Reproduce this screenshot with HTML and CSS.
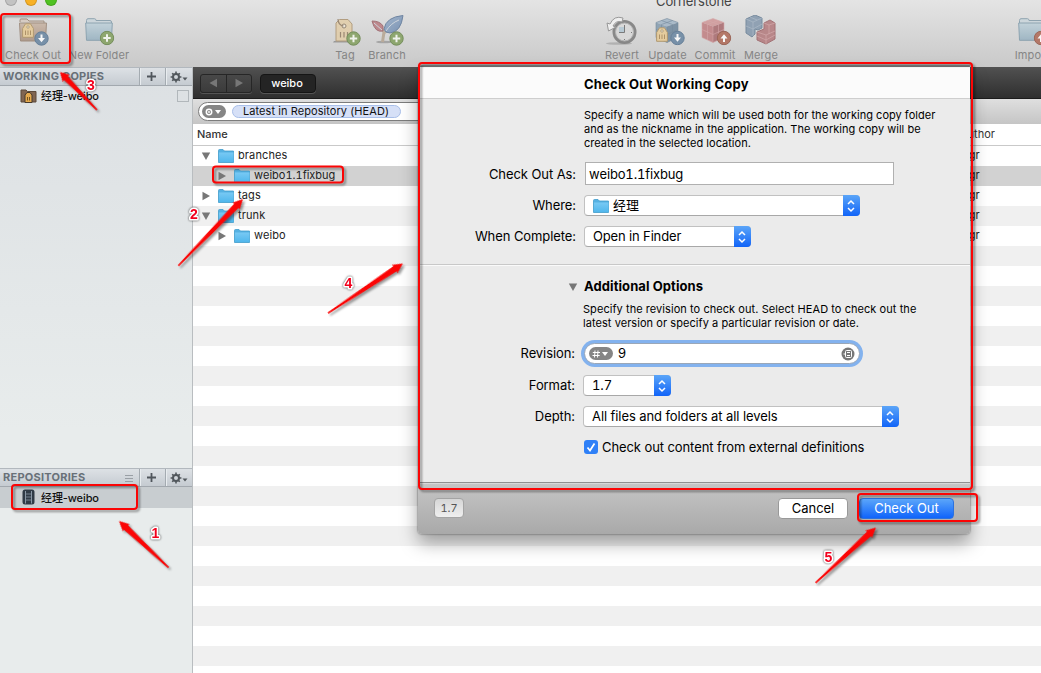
FILE: index.html
```html
<!DOCTYPE html>
<html lang="en">
<head>
<meta charset="utf-8">
<title>Cornerstone</title>
<link rel="stylesheet" href="styles.css">
</head>
<body>
<svg class="defs" width="0" height="0">
  <defs>
    <linearGradient id="gBlue" x2="0" y2="1"><stop stop-color="#78c9f4"/><stop offset="1" stop-color="#51b7ec"/></linearGradient>
    <linearGradient id="gPale" x2="0" y2="1"><stop stop-color="#bdd0da"/><stop offset="1" stop-color="#94b0c0"/></linearGradient>
    <linearGradient id="gBrown" x2="0" y2="1"><stop stop-color="#c8b3a2"/><stop offset="1" stop-color="#a78d7b"/></linearGradient>
    <linearGradient id="gLeaf" x2="1" y2="1"><stop stop-color="#98afca"/><stop offset="1" stop-color="#6482aa"/></linearGradient>
    <symbol id="folder" viewBox="0 0 16 14">
      <path d="M.5 1.5Q.5.5 1.500.5H5L6.500 2H15.500V13.500H.500z" fill="#55b1e2" stroke="#419dcc" stroke-width=".8"/>
      <path d="M1 3.500H15.500V13H1z" fill="url(#gBlue)"/>
    </symbol>
    <symbol id="bigfolder" viewBox="0 0 28 24">
      <path d="M1.500 5V2.500Q1.500.7 3 .7H9.500Q11 .7 11 2.500H25Q26.500 2.500 26.500 4V6" fill="#c9d5dc" stroke="#7f98a7"/>
      <path d="M.7 5H27.300L26.500 22.300H1.500z" fill="url(#gPale)" stroke="#7c98a8"/>
    </symbol>
    <symbol id="tag" viewBox="0 0 12 15">
      <path d="M.6 5.500 3.500.8H8.500L11.400 5.500V14.300H.6z" fill="#e8ca92" stroke="#a88c5c"/>
      <circle cx="6" cy="4" r="1.200" fill="#fff6dc" stroke="#8c7751" stroke-width=".7"/>
      <path d="M3.500 7.500V12M6 7.500V12M8.500 7.500V12" stroke="#a58350"/>
    </symbol>
    <symbol id="plus" viewBox="0 0 15 15">
      <circle cx="7.500" cy="7.500" r="6.700" fill="#7f9d59" stroke="#607e42"/>
      <path d="M7.500 3.800V11.200M3.800 7.500H11.200" stroke="#f7faf2" stroke-width="2"/>
    </symbol>
    <symbol id="down" viewBox="0 0 15 15">
      <circle cx="7.500" cy="7.500" r="6.700" fill="#64829f" stroke="#4f6d8b"/>
      <path d="M6.500 3.500H8.500V7H11L7.500 11.300 4 7H6.500z" fill="#fff"/>
    </symbol>
    <symbol id="up" viewBox="0 0 15 15">
      <circle cx="7.500" cy="7.500" r="6.700" fill="#ad6450" stroke="#8e4e3d"/>
      <path d="M6.500 11.500H8.500V8H11L7.500 3.700 4 8H6.500z" fill="#fff"/>
    </symbol>
    <symbol id="gear" viewBox="0 0 18 12">
      <circle cx="6" cy="6" r="3" fill="none" stroke="#51575c" stroke-width="2"/>
      <path d="M6 .6V3M6 9V11.400M.6 6H3M9 6H11.400M2.200 2.200 3.800 3.800M8.200 8.200 9.800 9.800M2.200 9.800 3.800 8.200M8.200 3.800 9.800 2.200" stroke="#51575c" stroke-width="1.600"/>
      <path d="M12.500 6.500H17.500L15 9.500z" fill="#51575c"/>
    </symbol>
    <symbol id="right" viewBox="0 0 10 10"><path d="M1.500 .8 9 5 1.500 9.200z" fill="#777"/></symbol>
    <symbol id="open" viewBox="0 0 10 10"><path d="M.8 1.500H9.200L5 9z" fill="#777"/></symbol>
    <symbol id="updown" viewBox="0 0 10 14"><path d="M2 5 5 2 8 5M2 9 5 12 8 9" fill="none" stroke="#fff" stroke-width="1.500"/></symbol>
    <symbol id="cube" viewBox="0 0 24 26">
      <path d="M1 5 12 1 23 5 12 9z" fill="var(--top)"/><path d="M1 5 12 9V25L1 20z" fill="var(--left)"/><path d="M12 9 23 5V20L12 25z" fill="var(--side)"/>
      <path d="M1 5 12 1 23 5V20L12 25 1 20zM12 9V25M1 12 12 17 23 12M6.500 3 17.500 7V22.500M17.500 3 6.500 7V22.500" fill="none" stroke="var(--line)" stroke-width=".6"/>
    </symbol>
  </defs>
</svg>

<div class="window">
  <header class="toolbar">
    <div class="titlebar">
      <i class="light light-grey"></i><i class="light light-amber"></i><i class="light light-green"></i>
      <span class="app-title">Cornerstone</span>
    </div>
    <div class="tools">
      <div class="tool w66"><svg viewBox="0 0 34 32"><path d="M4 7V5Q4 4 5 4H11L13 6H28V9" fill="#d6c9bf" stroke="#94806f"/><path d="M3.500 8H30.500L29.500 26H4.500z" fill="url(#gBrown)" stroke="#95806f"/><use href="#tag" x="6" y="8" width="12" height="15"/><use href="#down" x="18" y="16" width="15" height="15"/></svg><span>Check Out</span></div>
      <div class="tool w66"><svg viewBox="0 0 34 32"><use href="#bigfolder" x="3" y="3" width="28" height="24"/><use href="#plus" x="17.500" y="15.500" width="15" height="15"/></svg><span>New Folder</span></div>
      <div class="tool tool-tag"><svg viewBox="0 0 34 32"><path d="M6 26H24V27.500H5z" fill="#8d8d8d"/><path d="M8 8 11.500 4.500H20L24 9V26H8z" fill="#e3cda6" stroke="#a9906c"/><circle cx="16" cy="11" r="2" fill="#f2ead9" stroke="#877560"/><path d="M10 4Q10 10 15.500 11M12.500 17V22.500M16 17V22.500M19.500 17V22.500" fill="none" stroke="#8d775e" stroke-width="1.200"/><use href="#plus" x="18" y="16" width="15" height="15"/></svg><span>Tag</span></div>
      <div class="tool w42"><svg viewBox="0 0 34 32"><ellipse cx="14" cy="27" rx="8" ry="1.300" fill="#9b9b9b"/><path d="M12.500 27 14 17Q11 12 7 10M14 18Q18 14 23 11" fill="none" stroke="#b4a28d" stroke-width="3"/><path d="M2 6Q10 6 13 11L13 16Q5 18 2 6z" fill="#b8777c" stroke="#955c62"/><path d="M33 .5Q16 2 14 14Q15 18 20 18Q31 17 33 .5z" fill="url(#gLeaf)" stroke="#587294"/><path d="M16 16Q21 8 29 5M4 8 12 15" fill="none" stroke="#cbd3dc"/><use href="#plus" x="19" y="16" width="15" height="15"/></svg><span>Branch</span></div>
      <div class="tool tool-revert"><svg viewBox="0 0 34 32"><ellipse cx="14" cy="28.500" rx="13" ry="1.300" fill="#aaa"/><circle cx="19.500" cy="17" r="10.500" fill="#d9d9d9" stroke="#777" stroke-width="3"/><circle cx="19.500" cy="17" r="9" fill="none" stroke="#aaa"/><path d="M14 12H19V17H14z" fill="#b1c7d4"/><path d="M19.500 10V17.500H14M19.500 25V24M27 17.500H26" fill="none" stroke="#666" stroke-width="1"/><path d="M18 3Q9 0 5 9L2 8 3.500 16 11 12 8 11Q11 5 17 7z" fill="#f4f4f4" stroke="#888"/></svg><span>Revert</span></div>
      <div class="tool w47"><svg viewBox="0 0 34 32"><g class="cube-blue"><use href="#cube" x="4" y="2" width="24" height="27"/></g><use href="#tag" x="5" y="12" width="12" height="15"/><use href="#down" x="19" y="15.500" width="15" height="15"/></svg><span>Update</span></div>
      <div class="tool w48"><svg viewBox="0 0 34 32"><g class="cube-red"><use href="#cube" x="3" y="2" width="24" height="27"/></g><use href="#up" x="18.500" y="15.500" width="15" height="15"/></svg><span>Commit</span></div>
      <div class="tool w44"><svg viewBox="0 0 34 32"><path d="M2 4 11 0 18 3 18 13 14 15 11 14V19L8 22 2 18z" fill="#8095ab" stroke="#637a91"/><path d="M2 4 9 7 18 3M9 7V21M2 11 9 14 18 9M6 2 13 5" fill="none" stroke="#a3b3c3" stroke-width=".7"/><path d="M13 17 20 14V8L26 5 31 8V24L22 29 13 25z" fill="#b27679" stroke="#985d61"/><path d="M13 17 22 20 31 16M22 20V29M20 8 25 10 31 8M25 10V19M13 21 22 25 31 20" fill="none" stroke="#d3a1a2" stroke-width=".7"/></svg><span>Merge</span></div>
      <div class="tool tool-import"><svg viewBox="0 0 34 32"><use href="#bigfolder" x="3" y="3" width="28" height="24"/><use href="#up" x="18.500" y="15.500" width="15" height="15"/></svg><span>Import</span></div>
    </div>
  </header>

  <div class="content">
    <aside class="sidebar">
      <section class="working">
        <div class="side-head"><b>WORKING COPIES</b><span class="side-btn plus-btn"><svg width="9" height="9"><path d="M4.500 0V9M0 4.500H9" stroke="#50565c" stroke-width="1.800"/></svg></span><span class="side-btn"><svg width="18" height="12"><use href="#gear"/></svg></span></div>
        <div class="side-row"><svg width="17" height="16" viewBox="0 0 17 16"><path d="M1 2H6L7.500 3.500H16V14H1z" fill="#806552" stroke="#5d4a3b"/><path d="M5 7 7 4.500H10L12 7V14.500H5z" fill="#e4a94e" stroke="#473a2c"/><path d="M7.500 9V12.500M9.500 9V12.500" stroke="#76521d"/></svg><span>经理-weibo</span><i class="box"></i></div>
      </section>
      <section class="repos">
        <div class="side-head"><b>REPOSITORIES</b><svg class="grip" width="8" height="8"><path d="M0 1.500H8M0 4.500H8M0 7.500H8" stroke="#999fa5"/></svg><span class="side-btn plus-btn"><svg width="9" height="9"><path d="M4.500 0V9M0 4.500H9" stroke="#50565c" stroke-width="1.800"/></svg></span><span class="side-btn"><svg width="18" height="12"><use href="#gear"/></svg></span></div>
        <div class="side-row selected"><svg width="13" height="16" viewBox="0 0 13 16"><rect x=".5" y=".5" width="12" height="15" rx="2.500" fill="#303b46"/><path d="M3.500 2V14.500M9.500 2V14.500" stroke="#8997a5"/><path d="M4 5H9M4 8H9M4 11H9" stroke="#75828f"/></svg><span>经理-weibo</span></div>
      </section>
    </aside>

    <main class="browser">
      <nav class="path">
        <div class="nav-btns"><span><svg width="10" height="10"><path d="M9 .8 1.500 5 9 9.200z" fill="#777"/></svg></span><span><svg width="10" height="10"><use href="#right"/></svg></span></div>
        <span class="crumb">weibo</span>
      </nav>
      <div class="filter">
        <div class="filter-field"><span class="scope"><svg width="18" height="8" viewBox="0 0 18 8"><circle cx="4" cy="4" r="2.700" fill="none" stroke="#fff" stroke-width="1.500"/><circle cx="4" cy="4" r=".9" fill="#fff"/><path d="M10 2H16L13 6z" fill="#fff"/></svg></span><span class="token">Latest in Repository (HEAD)</span></div>
      </div>
      <div class="columns"><span>Name</span><span>Author</span></div>
      <div class="rows">
        <div class="row"><svg class="tri"><use href="#open"/></svg><svg class="fold"><use href="#folder"/></svg><span class="name">branches</span><span class="author">mgr</span></div>
        <div class="row child active"><svg class="tri"><use href="#right"/></svg><svg class="fold"><use href="#folder"/></svg><span class="name mixed">weibo1.1fixbug</span><span class="author">mgr</span></div>
        <div class="row"><svg class="tri"><use href="#right"/></svg><svg class="fold"><use href="#folder"/></svg><span class="name">tags</span><span class="author">mgr</span></div>
        <div class="row"><svg class="tri"><use href="#open"/></svg><svg class="fold"><use href="#folder"/></svg><span class="name">trunk</span><span class="author">mgr</span></div>
        <div class="row child"><svg class="tri"><use href="#right"/></svg><svg class="fold"><use href="#folder"/></svg><span class="name">weibo</span><span class="author">mgr</span></div>
      </div>
    </main>
  </div>

  <div class="sheet">
    <h1>Check Out Working Copy</h1>
    <div class="section naming">
      <p>Specify a name which will be used both for the working copy folder<br>and as the nickname in the application. The working copy will be<br>created in the selected location.</p>
      <div class="field as-row"><label>Check Out As:</label><div class="text mixed">weibo1.1fixbug</div></div>
      <div class="field"><label>Where:</label><div class="popup p276"><svg class="fold"><use href="#folder"/></svg><span>经理</span><i><svg width="10" height="14"><use href="#updown"/></svg></i></div></div>
      <div class="field"><label>When Complete:</label><div class="popup p167"><span>Open in Finder</span><i><svg width="10" height="14"><use href="#updown"/></svg></i></div></div>
    </div>
    <div class="section options">
      <h2><svg width="10" height="10"><use href="#open"/></svg><span>Additional Options</span></h2>
      <p>Specify the revision to check out. Select HEAD to check out the<br>latest version or specify a particular revision or date.</p>
      <div class="field revision-row"><label>Revision:</label><div class="revision"><span class="scope"><svg width="18" height="8" viewBox="0 0 18 8"><path d="M3 .5 2.500 7.500M6 .5 5.500 7.500M.8 2.500H8M.5 5.500H7.700" stroke="#fff" fill="none"/><path d="M10 2H16L13 6z" fill="#fff"/></svg></span><span>9</span><svg class="picker" width="14" height="14" viewBox="0 0 14 14"><circle cx="7" cy="7" r="6.500" fill="#777"/><rect x="4.500" y="3.500" width="6" height="7" rx="1" fill="none" stroke="#fff"/><path d="M6 5.500H9M6 8.500H9M2.500 7H4.500" stroke="#fff"/></svg></div></div>
      <div class="field"><label>Format:</label><div class="popup p88"><span class="mixed">1.7</span><i><svg width="10" height="14"><use href="#updown"/></svg></i></div></div>
      <div class="field"><label>Depth:</label><div class="popup p316"><span>All files and folders at all levels</span><i><svg width="10" height="14"><use href="#updown"/></svg></i></div></div>
      <div class="field"><span></span><div class="check"><svg width="14" height="14"><rect width="14" height="14" rx="3" fill="#2f80f7"/><path d="M3.500 7.500 6 10.500 10.500 3.500" fill="none" stroke="#fff" stroke-width="1.700"/></svg><span>Check out content from external definitions</span></div></div>
    </div>
    <footer class="actions"><span class="version mixed">1.7</span><button class="btn cancel">Cancel</button><button class="btn primary">Check Out</button></footer>
  </div>

  <svg class="notes" width="1041" height="673">
    <g class="frames">
      <rect x="1" y="14" width="69" height="49" rx="3"/>
      <rect x="213" y="166.500" width="130" height="16" rx="3"/>
      <rect x="419" y="63" width="553" height="426" rx="3"/>
      <rect x="12" y="485" width="125" height="24" rx="3"/>
      <rect x="858" y="494" width="119" height="27" rx="3"/>
    </g>
    <g class="arrows">
      <path transform="translate(119 521) rotate(43.200)" d="M0 0 10-5 9.500-3 68-.8V.8L9.500 3 10 5z"/>
      <path transform="translate(243 199) rotate(134.100)" d="M0 0 10-5 9.500-3 93-.8V.8L9.500 3 10 5z"/>
      <path transform="translate(60 72) rotate(45.800)" d="M0 0 9-5 8.500-2.800 53-.8V.8L8.500 2.800 9 5z"/>
      <path transform="translate(403 263.500) rotate(146.500)" d="M0 0 10-5 9.500-3 90-.8V.8L9.500 3 10 5z"/>
      <path transform="translate(876 527.500) rotate(137.500)" d="M0 0 10-5 9.500-3 82-.8V.8L9.500 3 10 5z"/>
    </g>
    <g class="numbers">
      <text x="155.500" y="538">1</text><text x="194" y="219">2</text><text x="91" y="90">3</text><text x="348.500" y="288">4</text><text x="828.500" y="562">5</text>
    </g>
  </svg>
</div>
</body>
</html>
```

FILE: styles.css
```css
* { box-sizing: border-box; }
body { margin: 0; font: 11px/14px Inter, "Noto Sans CJK SC", sans-serif; color: #222; }
.defs { position: absolute; }
svg { display: block; flex: none; }
.mixed { font-feature-settings: "tnum", "calt" 0; font-kerning: none; }
.window { position: relative; width: 1041px; height: 673px; overflow: hidden; display: flex; flex-direction: column; background: #fff; }

.toolbar { height: 67px; flex: none; background: linear-gradient(#e4e4e4, #c9c9c9); overflow: hidden; }
.titlebar { display: flex; height: 7px; padding-left: 5px; gap: 8px; }
.light { width: 12px; height: 12px; margin-top: -6px; border-radius: 50%; flex: none; border: 1px solid rgba(0,0,0,.15); }
.light-grey { background: #c3c3c3; }
.light-amber { background: #f8b126; }
.light-green { background: #50c222; }
.app-title { margin: -7px 0 0 591px; font-size: 13px; line-height: 16px; letter-spacing: -.1px; color: #444; }
.tools { display: flex; padding-top: 8px; }
.tool { display: flex; flex-direction: column; align-items: center; flex: none; color: #858585; line-height: 14px; white-space: nowrap; letter-spacing: .12px; }
.tool svg { width: 34px; height: 32px; margin-bottom: 1px; opacity: .82; }
.w66 { width: 66px; }
.w42 { width: 42px; }
.w44 { width: 44px; }
.w47 { width: 47px; }
.w48 { width: 48px; }
.tool-tag { width: 42px; margin-left: 192px; }
.tool-revert { width: 44px; margin-left: 192px; }
.tool-import { width: 40px; margin-left: 229px; }
.cube-blue { --top: #a0b4c6; --left: #8199ad; --side: #6a8399; --line: #5f788f; }
.cube-red { --top: #cf9495; --left: #bf7b7e; --side: #a6666a; --line: #d49c9e; }

.content { flex: 1; display: flex; min-height: 0; }
.sidebar { width: 193px; flex: none; border-right: 1px solid #b9bdc0; background: linear-gradient(#dce0e3, #e8ecec 60%); }
.working { height: 401px; }
.side-head { display: flex; align-items: center; height: 19px; background: linear-gradient(#dde1e5, #c5cbd1); border-bottom: 1px solid #a2a8ae; border-top: 1px solid #b2b8be; padding-left: 3px; color: #687078; }
.side-head b { flex: 1; font-weight: 700; line-height: 17px; letter-spacing: .24px; white-space: nowrap; }
.working .side-head b { margin-top: -1px; }
.grip { margin-right: 6px; }
.side-btn { display: flex; align-items: center; width: 27px; height: 17px; padding-left: 4px; border-left: 1px solid #a4abb1; box-shadow: inset 1px 0 #e8ecef; }
.side-btn.plus-btn { width: 26px; padding-left: 7px; }
.side-row { display: flex; align-items: center; height: 21px; padding-left: 20px; color: #111; font-weight: 500; gap: 4px; letter-spacing: -.1px; }
.working .side-row { height: 20px; }
.box { width: 12px; height: 12px; margin-left: auto; margin-right: 3px; border: 1px solid #b1b7bb; }
.selected { background: #c8cdd0; padding-left: 22px; gap: 6px; }
.selected svg { margin-top: -2px; }

.browser { flex: 1; min-width: 0; display: flex; flex-direction: column; }
.path { display: flex; align-items: center; height: 32px; flex: none; padding: 1px 0 0 7px; gap: 8px; background: linear-gradient(#515151, #2f2f2f); border-bottom: 1px solid #1c1c1c; }
.nav-btns { display: flex; width: 52px; height: 19px; border: 1px solid #262626; border-radius: 3px; background: linear-gradient(#484848, #3b3b3b); box-shadow: 0 1px #555; }
.nav-btns span { flex: 1; display: flex; align-items: center; justify-content: center; }
.nav-btns span + span { border-left: 1px solid #262626; }
.crumb { width: 56px; height: 19px; line-height: 17px; padding-right: 2px; text-align: center; border: 1px solid #151515; border-radius: 4px; background: #242424; color: #fff; box-shadow: 0 1px #555; font-weight: 500; }
.filter { height: 25px; flex: none; padding: 3px 0 0 5px; background: linear-gradient(#dfdfdf, #c5c5c5); }
.filter-field { display: flex; align-items: center; gap: 6px; width: 600px; height: 19px; border: 1px solid #7c7c7c; border-radius: 10px; background: #fff; padding-left: 3px; }
.scope { width: 24px; height: 13px; border-radius: 7px; background: #858585; display: flex; align-items: center; justify-content: center; }
.token { width: 169px; height: 13px; line-height: 11px; padding-right: 1px; text-align: center; border: 1px solid #a9bfe9; border-radius: 7px; background: #d6e0f7; color: #111; white-space: nowrap; letter-spacing: .07px; }
.columns { display: flex; height: 22px; flex: none; line-height: 21px; border-bottom: 1px solid #c9c9c9; padding-left: 4px; font-weight: 500; color: #333; }
.columns span:first-child { width: 763px; }
.columns span:last-child { font-weight: 400; }
.rows { flex: 1; background: repeating-linear-gradient(#fff 0 20px, #f0f0f0 20px 40px); }
.row { display: flex; align-items: center; height: 20px; padding-left: 8px; }
.tri { width: 10px; height: 10px; margin: -1px 7px 0 0; }
.fold { width: 16px; height: 14px; margin-right: 4px; }
.row .fold { margin-top: -1px; }
.name { width: 724px; line-height: 18px; letter-spacing: .12px; margin-top: -2px; }
.name.mixed { letter-spacing: 0; }
.author { line-height: 18px; margin: -3px 0 0 -3px; }
.child { padding-left: 24px; }
.child .name { width: 708px; }
.active { background: #d2d2d2; }

.sheet { position: absolute; left: 418px; top: 67px; width: 552px; height: 467px; display: flex; flex-direction: column; background: #ebebeb; border-radius: 0 0 4px 4px; box-shadow: 0 0 2px rgba(0,0,0,.6), 0 -2px 1px #929292, 0 9px 18px rgba(0,0,0,.35); color: #000; }
.sheet h1 { margin: 0; height: 32px; flex: none; padding-left: 166px; background: #fbfbfb; border-bottom: 1px solid #cecece; font: 700 13px/34px Inter, sans-serif; letter-spacing: .2px; word-spacing: 0; }
.section p { margin: 0 0 0 166px; white-space: nowrap; line-height: 14px; letter-spacing: .02px; }
.sheet h1, .sheet h2 { font-kerning: none; }
.naming { height: 166px; padding-top: 9px; border-bottom: 1px solid #c8c8c8; }
.naming p { margin-bottom: 12px; }
.field { display: grid; grid-template-columns: 158px auto; column-gap: 8px; justify-content: start; height: 21px; margin-bottom: 10px; font-size: 13px; line-height: 21px; white-space: nowrap; }
.field label { text-align: right; letter-spacing: -.08px; }
.as-row { height: 23px; line-height: 25px; }
.text { width: 309px; height: 23px; line-height: 22px; border: 1px solid #b0b0b0; background: #fff; padding-left: 3px; margin-left: 1px; letter-spacing: -.15px; }
.popup { display: flex; align-items: center; height: 21px; padding-left: 8px; background: #fff; border: 1px solid #c1c1c1; border-bottom-color: #a8a8a8; border-radius: 4px; }
.popup span { flex: 1; line-height: 19px; letter-spacing: -.09px; }
.popup i { width: 17px; height: 21px; margin: -1px; border-radius: 0 4px 4px 0; background: linear-gradient(#5ba5f8, #1164f8); display: flex; align-items: center; justify-content: center; }
.popup i svg { margin-left: -1px; }
.p276 { width: 276px; }
.p167 { width: 167px; }
.p167 span { letter-spacing: -.15px; }
.p88 { width: 88px; }
.p316 { width: 316px; }
.options { height: 217px; padding-top: 12px; box-shadow: inset 0 1px #fafafa; }
.options h2 { display: flex; align-items: center; gap: 6px; margin: 0 0 6px 150px; font: 700 13px/19px Inter, sans-serif; letter-spacing: .08px; }
.options p { margin: 0 0 13px 165px; letter-spacing: .06px; }
.options .field { grid-template-columns: 157px auto; }
.options .revision-row { margin-bottom: 11px; }
.revision { display: flex; align-items: center; width: 276px; height: 21px; padding: 0 4px 0 4px; gap: 5px; border: 1px solid #9aa7b8; border-radius: 11px; background: #fff; box-shadow: 0 0 0 3px #83b2ee; margin-left: 1px; }
.picker { margin-left: auto; }
.check { display: flex; align-items: center; gap: 4px; padding-left: 1px; letter-spacing: -.09px; }
.check svg { margin-top: -1px; }
.actions { flex: 1; display: flex; align-items: flex-start; padding: 15px 16px 0 16px; border-top: 1px solid #8f8f8f; border-radius: 0 0 4px 4px; background: linear-gradient(#c5c5c5, #a9a9a9); box-shadow: inset 0 1px #d8d8d8; }
.version { width: 30px; height: 20px; line-height: 18px; text-align: center; border: 1px solid #a4a4a4; border-radius: 4px; background: linear-gradient(#d6d6d6, #efefef); color: #555; margin-right: auto; }
.btn { height: 21px; padding: 0; border: 1px solid #999; border-radius: 4px; font: 13px/17px Inter, sans-serif; letter-spacing: -.05px; }
.cancel { width: 70px; background: #fff; color: #000; margin-right: 11px; }
.primary { width: 95px; background: linear-gradient(#5ba6fa, #1064fb); border-color: #2c72df; color: #fff; }

.notes { position: absolute; left: 0; top: 0; }
.frames, .arrows { filter: drop-shadow(2px 2px 1px rgba(0,0,0,.4)); }
.frames rect { fill: none; stroke: #fb0505; stroke-width: 2; }
.arrows { fill: #fb0505; }
.numbers { filter: drop-shadow(0 0 1px rgba(0,0,0,.75)); }
.numbers text { font: bold 14px "Liberation Sans", sans-serif; fill: #f2001c; stroke: #fff; stroke-width: 3px; paint-order: stroke; stroke-linejoin: round; text-anchor: middle; }
```
